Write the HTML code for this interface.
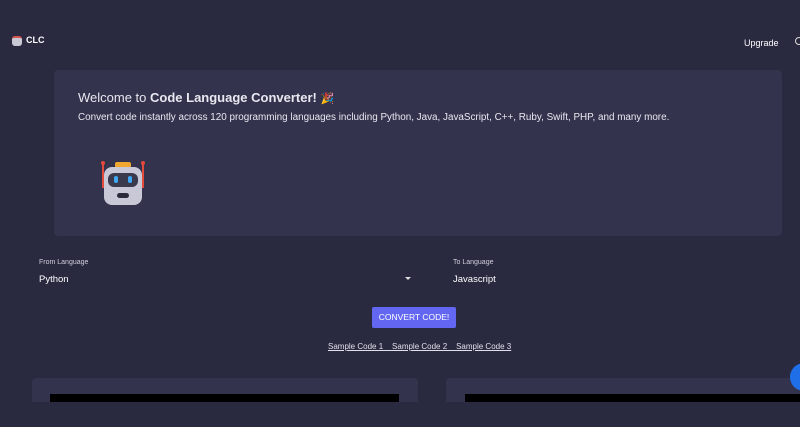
<!DOCTYPE html>
<html><head><style>
body{margin:0;width:800px;height:427px;overflow:hidden;background:#292940;font-family:"Liberation Sans",Arial,sans-serif;color:#e6e6ee;position:relative}
.a{position:absolute}
</style></head><body>
<div class="a" style="left:12px;top:36px;width:10px;height:10px;border-radius:3px;background:#c9c9d6;border-top:2px solid #d9534f;box-sizing:border-box"></div>
<div class="a" style="left:26px;top:35px;font-size:9px;font-weight:bold;color:#fff">CLC</div>
<div class="a" style="left:744px;top:38px;font-size:9px;color:#fff">Upgrade</div>
<div class="a" style="left:795px;top:37px;width:6px;height:6px;border:1.3px solid #ddd;border-radius:50%"></div>
<div class="a" style="left:54px;top:70px;width:728px;height:166px;background:#33334e;border-radius:4px"></div>
<div class="a" style="left:78px;top:90px;font-size:13px;color:#e8e8f0">Welcome to <b>Code Language Converter!</b> <span style="font-size:11px">🎉</span></div>
<div class="a" style="left:78px;top:112px;font-size:9.9px;color:#e8e8f0">Convert code instantly across 120 programming languages including Python, Java, JavaScript, C++, Ruby, Swift, PHP, and many more.</div>
<svg class="a" style="left:98px;top:158px" width="50" height="50" viewBox="0 0 50 50">
<line x1="5" y1="6" x2="5" y2="30" stroke="#e24a3b" stroke-width="2"/><line x1="45" y1="6" x2="45" y2="30" stroke="#e24a3b" stroke-width="2"/>
<circle cx="5" cy="5" r="2" fill="#e24a3b"/><circle cx="45" cy="5" r="2" fill="#e24a3b"/>
<rect x="17" y="4" width="16" height="6" rx="2" fill="#f0a830"/>
<rect x="6" y="9" width="38" height="38" rx="8" fill="#c8c8d6"/>
<rect x="10" y="15" width="30" height="14" rx="6" fill="#3a3a4e"/>
<rect x="16" y="18" width="4" height="7" rx="2" fill="#3fa9f5"/><rect x="30" y="18" width="4" height="7" rx="2" fill="#3fa9f5"/>
<rect x="19" y="35" width="12" height="5" rx="2.5" fill="#2a2a3a"/>
</svg>
<div class="a" style="left:39px;top:259px;font-size:7px;color:#d0d0dc">From Language</div>
<div class="a" style="left:39px;top:274px;font-size:9.5px;color:#fff">Python</div>
<div class="a" style="left:405px;top:277px;width:0;height:0;border-left:3px solid transparent;border-right:3px solid transparent;border-top:3px solid #ddd"></div>
<div class="a" style="left:453px;top:259px;font-size:7px;color:#d0d0dc">To Language</div>
<div class="a" style="left:453px;top:274px;font-size:9.5px;color:#fff">Javascript</div>
<div class="a" style="left:372px;top:307px;width:84px;height:21px;background:#6366f1;border-radius:2px;color:#fff;font-size:8.5px;line-height:21px;text-align:center">CONVERT CODE!</div>
<div class="a" style="left:328px;top:342px;font-size:8px;color:#e0e0ea;text-decoration:underline">Sample Code 1&nbsp;&nbsp;&nbsp;&nbsp;Sample Code 2&nbsp;&nbsp;&nbsp;&nbsp;Sample Code 3</div>
<div class="a" style="left:32px;top:378px;width:386px;height:30px;background:#33334e;border-radius:4px"></div>
<div class="a" style="left:50px;top:394px;width:349px;height:9px;background:#000"></div>
<div class="a" style="left:446px;top:378px;width:354px;height:30px;background:#33334e;border-radius:4px"></div>
<div class="a" style="left:465px;top:394px;width:335px;height:9px;background:#000"></div>
<div class="a" style="left:0;top:402px;width:800px;height:25px;background:#292940"></div>
<div class="a" style="left:790px;top:363px;width:28px;height:28px;border-radius:50%;background:#1e6fe8"></div>
</body></html>
